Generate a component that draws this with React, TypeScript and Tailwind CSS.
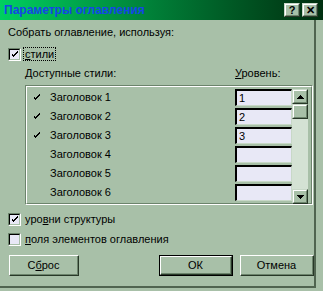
import React from "react";

const font = { fontFamily: '"Liberation Sans", Arial, sans-serif' };

function CheckMark({ className = "" }: { className?: string }) {
  return (
    <svg width="7" height="7" viewBox="0 0 7 7" className={className} shapeRendering="crispEdges">
      <path d="M0 2h1v3h1v1h1v-1h1v-1h1v-1h1v-1h1v-2h-1v1h-1v1h-1v1h-1v1h-1v-1h-1v-1h-1z" fill="#000" />
    </svg>
  );
}

function CheckBox({ checked }: { checked: boolean }) {
  return (
    <div className="w-[13px] h-[13px] border-t border-l border-[#6c846c] border-b border-r border-b-white border-r-white shrink-0">
      <div className="w-full h-full border-t border-l border-black border-b border-r border-b-[#a8c0a8] border-r-[#a8c0a8] bg-[#e8e8f6] flex items-center justify-center">
        {checked && <CheckMark />}
      </div>
    </div>
  );
}

function Button({ children, def = false, w }: { children: React.ReactNode; def?: boolean; w: string }) {
  return (
    <div className={`${w} h-[21px] ${def ? "border border-black" : ""}`}>
      <div className="w-full h-full border-t border-l border-t-white border-l-white border-b border-r border-b-[#283828] border-r-[#283828]">
        <div className="w-full h-full border-b border-r border-b-[#6c846c] border-r-[#6c846c] flex items-center justify-center text-[11px] text-black">
          {children}
        </div>
      </div>
    </div>
  );
}

function Arrow({ up }: { up: boolean }) {
  return (
    <svg width="7" height="4" viewBox="0 0 7 4" shapeRendering="crispEdges">
      {up ? <path d="M3 0h1v1h1v1h1v1h1v1h-7v-1h1v-1h1v-1h1z" fill="#000" /> : <path d="M0 0h7v1h-1v1h-1v1h-1v1h-1v-1h-1v-1h-1v-1h-1z" fill="#000" />}
    </svg>
  );
}

function RaisedBox({ className = "", children }: { className?: string; children?: React.ReactNode }) {
  return (
    <div className={`border-t border-l border-t-[#c8d8c8] border-l-[#c8d8c8] border-b border-r border-b-[#283828] border-r-[#283828] ${className}`}>
      <div className="w-full h-full border-t border-l border-t-white border-l-white border-b border-r border-b-[#6c846c] border-r-[#6c846c] bg-[#a8c0a8] flex items-center justify-center">
        {children}
      </div>
    </div>
  );
}

const rows = [
  { name: "Заголовок 1", on: true, lvl: "1" },
  { name: "Заголовок 2", on: true, lvl: "2" },
  { name: "Заголовок 3", on: true, lvl: "3" },
  { name: "Заголовок 4", on: false, lvl: "" },
  { name: "Заголовок 5", on: false, lvl: "" },
  { name: "Заголовок 6", on: false, lvl: "" },
];

export default function App() {
  return (
    <div className="w-[323px] h-[291px] bg-[#a8c0a8] overflow-hidden select-none" style={font}>
      <div className="h-[20px] bg-linear-to-r from-[#00d060] to-[#003010] flex items-center pl-[4px] pr-[5px]">
        <span className="text-[12px] font-bold text-blue-700 flex-1 leading-none">Параметры оглавления</span>
        <RaisedBox className="w-[16px] h-[14px]">
          <span className="text-[11px] font-bold leading-none text-black">?</span>
        </RaisedBox>
        <RaisedBox className="w-[16px] h-[14px] ml-[2px]">
          <span className="text-[11px] font-bold leading-none text-black">✕</span>
        </RaisedBox>
      </div>

      <div className="w-[316px] h-[268px] border-r-2 border-b-2 border-[#506450] text-[11px] text-black leading-[13px]">
        <div className="pl-[8px] pt-[6px]">Собрать оглавление, используя:</div>

        <div className="flex items-center pl-[8px] mt-[8px] gap-[2px]">
          <CheckBox checked />
          <span className="border border-dotted border-black px-[1px] leading-[12px]">
            <span className="underline">с</span>тили
          </span>
        </div>

        <div className="flex pl-[25px] mt-[6px]">
          <span className="w-[210px]">Доступные стили:</span>
          <span><span className="underline">У</span>ровень:</span>
        </div>

        <div className="ml-[25px] w-[288px] h-[120px] mt-[5px] border border-t-[#6c846c] border-l-[#6c846c] border-b-white border-r-white">
          <div className="w-full h-full border border-t-white border-l-white border-b-[#6c846c] border-r-[#6c846c] flex pt-[1px]">
            <div className="flex-1 flex flex-col">
              {rows.map((r) => (
                <div key={r.name} className="h-[19px] flex items-center">
                  <div className="w-[23px] flex justify-end pr-[10px]">{r.on && <CheckMark />}</div>
                  <span>{r.name}</span>
                </div>
              ))}
            </div>
            <div className="flex flex-col">
              {rows.map((r) => (
                <div key={r.name} className="h-[19px] pt-[1px]">
                  <div className="w-[57px] h-[17px] border-t-2 border-l-2 border-black border-b border-r border-b-[#c8d8c8] border-r-[#c8d8c8] bg-[#e8e8f6] pl-[2px] flex items-center">
                    {r.lvl}
                  </div>
                </div>
              ))}
            </div>
            <div className="w-[16px] mr-[3px] mt-[1px] h-[115px] bg-[#d4e2d4] flex flex-col">
              <RaisedBox className="w-[16px] h-[15px]"><Arrow up /></RaisedBox>
              <RaisedBox className="w-[16px] h-[15px]" />
              <div className="flex-1" />
              <RaisedBox className="w-[16px] h-[15px]"><Arrow up={false} /></RaisedBox>
            </div>
          </div>
        </div>

        <div className="flex items-center pl-[8px] mt-[8px] gap-[4px]">
          <CheckBox checked />
          <span>уро<span className="underline">в</span>ни структуры</span>
        </div>
        <div className="flex items-center pl-[8px] mt-[7px] gap-[4px]">
          <CheckBox checked={false} />
          <span><span className="underline">п</span>оля элементов оглавления</span>
        </div>

        <div className="flex pl-[9px] mt-[9px]">
          <Button w="w-[70px]">
            <span>С<span className="underline">б</span>рос</span>
          </Button>
          <div className="ml-[80px]">
            <Button w="w-[74px]" def>ОК</Button>
          </div>
          <div className="ml-[7px]">
            <Button w="w-[74px]">Отмена</Button>
          </div>
        </div>
      </div>
    </div>
  );
}
